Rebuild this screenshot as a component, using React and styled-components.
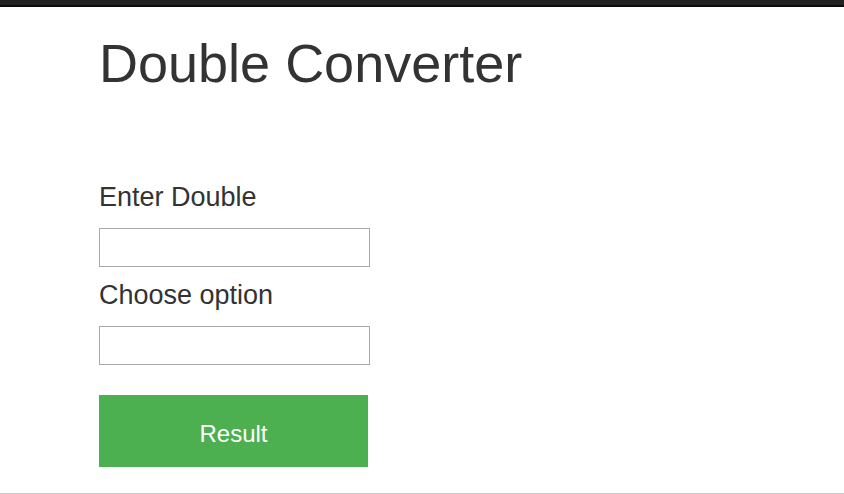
import React from "react";
import styled, { createGlobalStyle } from "styled-components";

const GlobalStyle = createGlobalStyle`
  html, body {
    margin: 0;
    padding: 0;
    background: #fff;
  }
  body {
    font-family: "Liberation Sans", Arial, sans-serif;
    color: #333;
  }
  * {
    box-sizing: border-box;
  }
`;

const Page = styled.div`
  min-height: 494px;
  display: flex;
  flex-direction: column;
  border-bottom: 1px solid #c8c8c8;
`;

const TopBar = styled.div`
  height: 7px;
  background: #222;
  border-bottom: 2px solid #0b0b0b;
`;

const Container = styled.div`
  display: flex;
  flex-direction: column;
  align-items: flex-start;
  padding-left: 99px;
`;

const Title = styled.h1`
  margin: 26px 0 0;
  font-size: 54px;
  line-height: 60px;
  font-weight: normal;
  color: #333;
`;

const Form = styled.form`
  display: flex;
  flex-direction: column;
  align-items: flex-start;
  margin-top: 89px;
`;

const Label = styled.label`
  display: block;
  font-size: 27px;
  line-height: 30px;
  color: #333;
  margin-top: ${props => (props.first ? "0" : "13px")};
`;

const Input = styled.input`
  display: block;
  width: 271px;
  height: 39px;
  margin-top: 16px;
  border: 1px solid #a9a9a9;
  padding: 0 8px;
  font-size: 16px;
  font-family: inherit;
  outline: none;
`;

const Button = styled.button`
  width: 269px;
  height: 72px;
  margin-top: 30px;
  padding: 6px 0 0;
  border: none;
  background: #4caf50;
  color: #fff;
  font-family: inherit;
  font-size: 24px;
  cursor: pointer;
`;

export default function App() {
  return (
    <>
      <GlobalStyle />
      <Page>
        <TopBar />
        <Container>
          <Title>Double Converter</Title>
          <Form onSubmit={e => e.preventDefault()}>
            <Label first htmlFor="double">Enter Double</Label>
            <Input id="double" type="text" />
            <Label htmlFor="option">Choose option</Label>
            <Input id="option" type="text" />
            <Button type="submit">Result</Button>
          </Form>
        </Container>
      </Page>
    </>
  );
}
